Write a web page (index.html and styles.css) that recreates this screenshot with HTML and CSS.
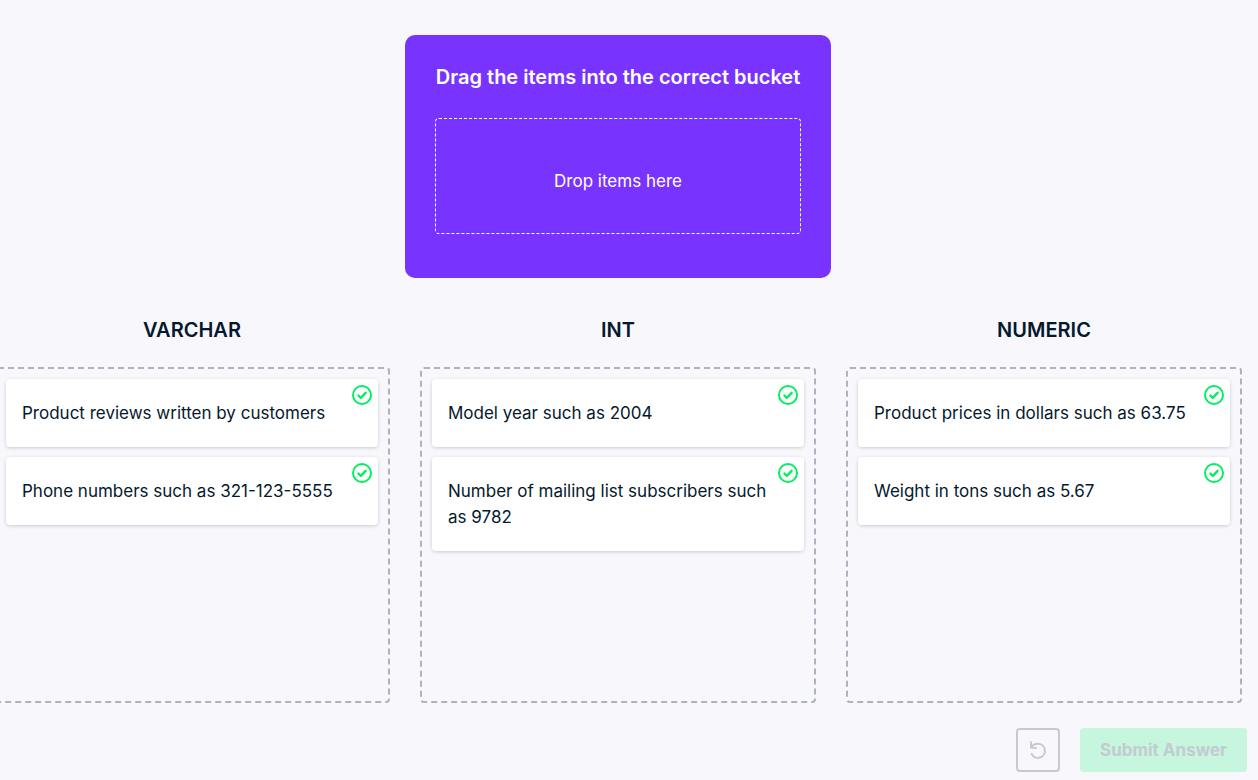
FILE: index.html
```html
<!DOCTYPE html>
<html lang="en">
<head>
<meta charset="utf-8">
<meta name="viewport" content="width=device-width, initial-scale=1">
<title>Drag and drop exercise</title>
<link rel="stylesheet" href="styles.css">
</head>
<body>
<svg class="sprite" aria-hidden="true">
  <symbol id="check" viewBox="0 0 20 20">
    <circle cx="10" cy="10" r="9" fill="none" stroke="currentColor" stroke-width="2"/>
    <path d="M6.400 10.500l2.400 2.300 4.800-5" fill="none" stroke="currentColor" stroke-width="2.400" stroke-linecap="round" stroke-linejoin="round"/>
  </symbol>
</svg>
<main class="exercise">
  <section class="source">
    <h1 class="source-title">Drag the items into the correct bucket</h1>
    <div class="source-drop">Drop items here</div>
  </section>
  <div class="buckets">
    <section class="bucket">
      <h2 class="bucket-title">VARCHAR</h2>
      <ul class="bucket-drop">
        <li class="item">Product reviews written by customers<svg class="item-check"><use href="#check"/></svg></li>
        <li class="item">Phone numbers such as 321-123-5555<svg class="item-check"><use href="#check"/></svg></li>
      </ul>
    </section>
    <section class="bucket">
      <h2 class="bucket-title">INT</h2>
      <ul class="bucket-drop">
        <li class="item">Model year such as 2004<svg class="item-check"><use href="#check"/></svg></li>
        <li class="item">Number of mailing list subscribers such as 9782<svg class="item-check"><use href="#check"/></svg></li>
      </ul>
    </section>
    <section class="bucket">
      <h2 class="bucket-title">NUMERIC</h2>
      <ul class="bucket-drop">
        <li class="item">Product prices in dollars such as 63.75<svg class="item-check"><use href="#check"/></svg></li>
        <li class="item">Weight in tons such as 5.67<svg class="item-check"><use href="#check"/></svg></li>
      </ul>
    </section>
  </div>
</main>
<footer class="actions">
  <button class="reset" type="button" aria-label="Reset" disabled>
    <svg class="reset-icon" viewBox="0 0 18 18"><path d="M2 1.200v5.300l4.800.6M2.200 6.300C3.600 4 6.200 2.800 9 2.800a7 7 0 1 1-6.300 10.200" fill="none" stroke="currentColor" stroke-width="2" stroke-linecap="round" stroke-linejoin="round"/></svg>
  </button>
  <button class="submit" type="button" disabled>Submit Answer</button>
</footer>
</body>
</html>
```
FILE: styles.css
```css
* {
  box-sizing: border-box;
}

body {
  margin: 0;
  overflow-x: hidden;
  background: #f7f7fc;
  color: #05192d;
  font-family: Inter, "Liberation Sans", sans-serif;
  font-size: 17px;
  line-height: 26px;
}

.sprite {
  position: absolute;
  width: 0;
  height: 0;
}

.exercise {
  margin: 0 16px 0 -6px;
  padding-top: 35px;
}

.source {
  width: 426px;
  max-width: 100%;
  margin: 0 auto 38px;
  padding: 28px 30px 44px;
  border-radius: 10px;
  background: #7933ff;
  color: #fff;
  text-align: center;
}

.source-title {
  margin: 0 -20px 27px;
  font-size: 20px;
  font-weight: 600;
  line-height: 28px;
}

.source-drop {
  padding: 49px 16px 39px;
  border: 1px dashed #fff;
  border-radius: 4px;
}

.buckets {
  display: grid;
  grid-template-columns: repeat(3, minmax(0, 1fr));
  gap: 30px;
}

.bucket {
  display: flex;
  flex-direction: column;
}

.bucket-title {
  margin: 0 0 23px;
  font-size: 20px;
  font-weight: 600;
  line-height: 28px;
  text-align: center;
}

.bucket-drop {
  display: flex;
  flex: 1;
  flex-direction: column;
  gap: 10px;
  min-height: 336px;
  margin: 0;
  padding: 10px;
  border: 2px dashed #aeb4bf;
  border-radius: 4px;
  list-style: none;
}

.item {
  position: relative;
  padding: 21px 16px;
  border-radius: 4px;
  background: #fff;
  box-shadow: 0 1px 4px -1px rgba(5, 25, 45, 0.3);
}

.item-check {
  position: absolute;
  top: 6px;
  right: 6px;
  width: 20px;
  height: 20px;
  color: #03ef62;
}

.actions {
  display: flex;
  justify-content: flex-end;
  gap: 20px;
  padding: 25px 11px 8px;
}

.reset,
.submit {
  height: 44px;
  border-radius: 4px;
  color: #c5cad2;
  font: inherit;
}

.reset {
  display: grid;
  place-items: center;
  width: 44px;
  padding: 0;
  border: 2px solid #c5cad2;
  background: transparent;
}

.reset-icon {
  width: 18px;
  height: 18px;
}

.submit {
  min-width: 167px;
  padding: 0 16px;
  border: 0;
  background: #c6f6de;
  font-weight: 700;
}
```
